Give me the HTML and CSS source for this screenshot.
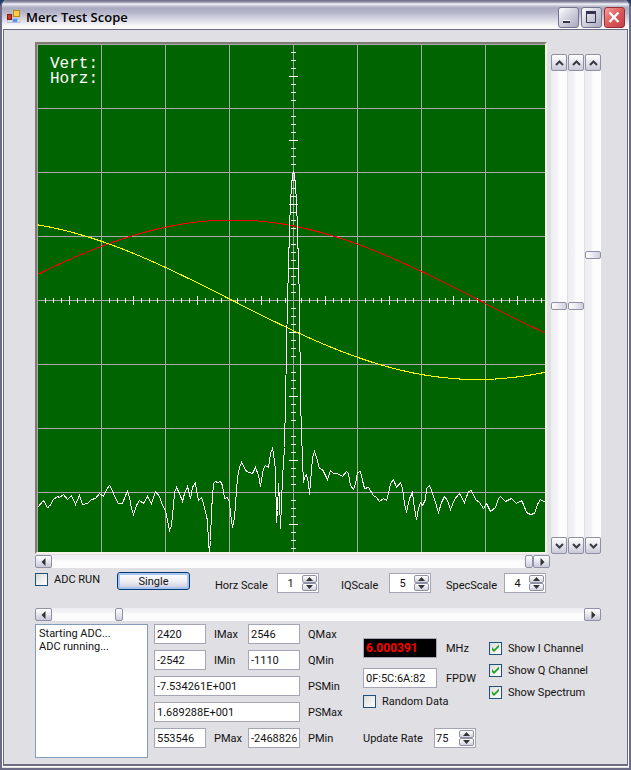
FILE: index.html
```
<!DOCTYPE html>
<html lang="en">
<head>
  <meta charset="UTF-8" />
  <meta name="viewport" content="width=device-width, initial-scale=1.0"/>
  <title>Merc Test Scope</title>
  <link rel="stylesheet" href="styles.css">
</head>
<body>

  <!-- shared icons -->
  <svg class="defs" width="0" height="0" aria-hidden="true">
    <symbol id="up" viewBox="0 0 9 6"><path d="M1 5 4.500 1.500 8 5" fill="none" stroke="#3a3a44" stroke-width="2"/></symbol>
    <symbol id="down" viewBox="0 0 9 6"><path d="M1 1 4.500 4.500 8 1" fill="none" stroke="#3a3a44" stroke-width="2"/></symbol>
    <symbol id="left" viewBox="0 0 6 8"><path d="M4.500 0v8L.5 4z" fill="#333"/></symbol>
    <symbol id="right" viewBox="0 0 6 8"><path d="M1.500 0v8l4-4z" fill="#333"/></symbol>
    <symbol id="tri-up" viewBox="0 0 7 4"><path d="M0 4h7L3.500 0z" fill="#333"/></symbol>
    <symbol id="tri-down" viewBox="0 0 7 4"><path d="M0 0h7L3.500 4z" fill="#333"/></symbol>
  </svg>

  <div class="window">
    <header class="titlebar">
      <svg class="app-icon" viewBox="0 0 14 14" aria-hidden="true">
        <path d="M0 12.500h13M.5 3v10M5.500 0v12M13 7v6" stroke="#c4c4cc" fill="none"/>
        <rect x=".5" y="4.500" width="4" height="5" fill="#c8392b" stroke="#8c1712"/>
        <rect x="6.500" y=".5" width="6" height="6" fill="#f8cf4a" stroke="#b98713"/>
        <rect x="5.500" y="8.500" width="5" height="4" fill="#5b94ea" stroke="#a9c6f3"/>
      </svg>
      <h1>Merc Test Scope</h1>
      <div class="window-buttons">
        <button class="win-btn" aria-label="Minimize"><svg viewBox="0 0 18 18"><path d="M4 12h7v3H4z" fill="#fff"/><path d="M4 13h7v2H4z" fill="#33334f"/></svg></button>
        <button class="win-btn" aria-label="Maximize"><svg viewBox="0 0 18 18"><path d="M4.500 5v9.500h9V5" fill="none" stroke="#33334f"/><path d="M4 4.500h10" stroke="#33334f" stroke-width="3"/></svg></button>
        <button class="win-btn close" aria-label="Close"><svg viewBox="0 0 18 18"><path d="M4.500 4.500l9 9.500M13.500 4.500l-9 9.500" fill="none" stroke="#fff" stroke-width="2.400"/></svg></button>
      </div>
    </header>

    <main class="client">
      <div class="display">
        <div class="scope">
          <svg id="scope" viewBox="0 0 508 508" role="img" aria-label="Scope display">
            <path id="grid" class="grid"/>
            <path id="ticks" class="ticks"/>
            <path id="iTrace" class="trace i-trace"/>
            <path id="qTrace" class="trace q-trace"/>
            <path id="spectrum" class="trace spectrum"/>
            <text x="13" y="24">Vert:</text>
            <text x="13" y="39">Horz:</text>
          </svg>
        </div>
        <div class="vbars">
          <div class="vbar">
            <button aria-label="I offset up"><svg><use href="#up"/></svg></button>
            <input type="range" aria-label="I offset" min="0" max="1000" value="505">
            <button aria-label="I offset down"><svg><use href="#down"/></svg></button>
          </div>
          <div class="vbar">
            <button aria-label="Q offset up"><svg><use href="#up"/></svg></button>
            <input type="range" aria-label="Q offset" min="0" max="1000" value="505">
            <button aria-label="Q offset down"><svg><use href="#down"/></svg></button>
          </div>
          <div class="vbar">
            <button aria-label="Spectrum offset up"><svg><use href="#up"/></svg></button>
            <input type="range" aria-label="Spectrum offset" min="0" max="1000" value="392">
            <button aria-label="Spectrum offset down"><svg><use href="#down"/></svg></button>
          </div>
        </div>
      </div>

      <div class="hbar hbar-scope">
        <button aria-label="Scroll left"><svg><use href="#left"/></svg></button>
        <input type="range" aria-label="Horizontal position" min="0" max="1000" value="1000">
        <button aria-label="Scroll right"><svg><use href="#right"/></svg></button>
      </div>

      <div class="controls">
        <label class="check"><input type="checkbox"> ADC RUN</label>
        <button class="btn-single">Single</button>
        <label class="low" for="horzScale">Horz Scale</label>
        <div class="spin">
          <input type="text" id="horzScale" value="1">
          <button aria-label="Increase"><svg><use href="#tri-up"/></svg></button>
          <button aria-label="Decrease"><svg><use href="#tri-down"/></svg></button>
        </div>
        <label class="low" for="iqScale">IQScale</label>
        <div class="spin">
          <input type="text" id="iqScale" value="5">
          <button aria-label="Increase"><svg><use href="#tri-up"/></svg></button>
          <button aria-label="Decrease"><svg><use href="#tri-down"/></svg></button>
        </div>
        <label class="low" for="specScale">SpecScale</label>
        <div class="spin">
          <input type="text" id="specScale" value="4">
          <button aria-label="Increase"><svg><use href="#tri-up"/></svg></button>
          <button aria-label="Decrease"><svg><use href="#tri-down"/></svg></button>
        </div>
      </div>

      <div class="hbar">
        <button aria-label="Tune down"><svg><use href="#left"/></svg></button>
        <input type="range" aria-label="Tuning" min="0" max="1000" value="120">
        <button aria-label="Tune up"><svg><use href="#right"/></svg></button>
      </div>

      <div class="panel">
        <textarea class="log" aria-label="Log" readonly>Starting ADC...
ADC running...</textarea>

        <div class="readings">
          <input type="text" id="iMax" value="2420"><label for="iMax">IMax</label>
          <input type="text" id="qMax" value="2546"><label for="qMax">QMax</label>
          <input type="text" id="iMin" value="-2542"><label for="iMin">IMin</label>
          <input type="text" id="qMin" value="-1110"><label for="qMin">QMin</label>
          <input type="text" id="psMin" class="wide" value="-7.534261E+001"><label for="psMin">PSMin</label>
          <input type="text" id="psMax" class="wide" value="1.689288E+001"><label for="psMax">PSMax</label>
          <input type="text" id="pMax" value="553546"><label for="pMax">PMax</label>
          <input type="text" id="pMin" value="-2468826"><label for="pMin">PMin</label>
        </div>

        <div class="tuning">
          <div class="field"><input type="text" id="freq" class="freq" value="6.000391"><label for="freq">MHz</label></div>
          <div class="field"><input type="text" id="fpdw" value="0F:5C:6A:82"><label for="fpdw">FPDW</label></div>
          <label class="check"><input type="checkbox"> Random Data</label>
          <div class="rate">
            <label for="rate">Update Rate</label>
            <div class="spin">
              <input type="text" id="rate" value="75">
              <button aria-label="Increase"><svg><use href="#tri-up"/></svg></button>
              <button aria-label="Decrease"><svg><use href="#tri-down"/></svg></button>
            </div>
          </div>
        </div>

        <div class="channels">
          <label class="check"><input type="checkbox" checked> Show I Channel</label>
          <label class="check"><input type="checkbox" checked> Show Q Channel</label>
          <label class="check"><input type="checkbox" checked> Show Spectrum</label>
        </div>
      </div>
    </main>
  </div>

  <script src="scope.js"></script>
</body>
</html>
```
FILE: styles.css
```
* {
  box-sizing: border-box;
}
body {
  margin: 0;
  background: #1d3b66;
  font-family: Roboto, "Liberation Sans", sans-serif;
  font-size: 11px;
  line-height: 13px;
  color: #111;
}
button, input, textarea {
  font: inherit;
  color: inherit;
  margin: 0;
  padding: 0;
}
.defs { position: absolute; }

.window {
  display: flex;
  flex-direction: column;
  min-height: 100vh;
  border: 2px solid #6b6b85;
  border-top: 0;
  border-radius: 7px 7px 0 0;
  background: #e0dfe3;
  overflow: hidden;
}
.titlebar {
  display: flex;
  align-items: center;
  height: 29px;
  padding: 5px 4px 0 5px;
  background: linear-gradient(#6b6b85 0, #8e8ea6 2px, #f4f4fa 4px, #c3c3d5 6px, #a9a9bf 8px, #b8b8cd 13px, #d6d6e2 19px, #f3f3f7 25px, #fff 27px, #dcdce4 29px);
}
.titlebar h1 {
  flex: 1;
  margin: 0 0 0 5px;
  font: 600 13px/18px "Open Sans", sans-serif;
  color: #000;
}
.app-icon { width: 14px; height: 14px; }
.window-buttons {
  display: flex;
  gap: 2px;
}
.win-btn {
  width: 21px;
  height: 21px;
  border: 1px solid #73738f;
  border-radius: 3px;
  background: linear-gradient(135deg, #fff, #d3d3df 45%, #a9a9bf);
}
.win-btn svg { display: block; width: 18px; height: 18px; }
.win-btn.close {
  border-color: #9c2b33;
  background: linear-gradient(135deg, #f3a09c, #dd5a5a 50%, #c04048);
}

.client {
  flex: 1;
  padding: 12px 26px 6px 31px;
  border: 1px solid #6b6b85;
  border-width: 1px 1px 2px 1px;
  outline: 1px solid #fff;
  margin: 0 1px 2px;
}

/* scope and its scrollbars */
.display {
  display: flex;
  gap: 4px;
}
.scope {
  flex: 1;
  border: 2px solid;
  border-color: #7d7b74 #f5f3e8 #f5f3e8 #7d7b74;
}
.scope svg {
  display: block;
  width: 100%;
  background: #006400;
}
.scope path {
  fill: none;
  shape-rendering: crispEdges;
}
.grid { stroke: #a9a9a9; }
.ticks { stroke: #fff; }
.i-trace { stroke: #ff0000; }
.q-trace { stroke: #ffff00; }
.spectrum { stroke: #fff; }
.scope text {
  font: 16px "Liberation Mono", monospace;
  fill: #fff;
}

.vbars {
  display: flex;
  gap: 1px;
  padding-top: 12px;
}
.vbar {
  display: flex;
  flex-direction: column;
  width: 16px;
}
.hbar {
  display: flex;
  height: 13px;
}
.hbar-scope { margin: 1px 51px 0 0; }
.vbar button, .hbar button {
  display: flex;
  align-items: center;
  justify-content: center;
  flex: none;
  border: 1px solid #8f8fa6;
  border-radius: 2px;
  background: linear-gradient(#fff, #e6e6ee 50%, #c9c9d8);
}
.vbar button { width: 16px; height: 17px; }
.hbar button { width: 17px; height: 13px; }
.vbar button svg { width: 9px; height: 6px; }
.hbar button svg { width: 6px; height: 8px; }
.vbar input, .hbar input {
  appearance: none;
  flex: 1;
  min-width: 0;
  min-height: 0;
}
.vbar input {
  writing-mode: vertical-lr;
  width: 16px;
  background: linear-gradient(90deg, #ededf2 0, #f2f2f6 6px, #fcfcfd 8px);
}
.hbar input {
  height: 13px;
  background: linear-gradient(#ededf2 0, #f2f2f6 4px, #fcfcfd 6px);
}
.vbar input::-webkit-slider-thumb {
  appearance: none;
  width: 16px;
  height: 8px;
  border: 1px solid #8f8fa6;
  border-radius: 2px;
  background: linear-gradient(90deg, #fff, #d0d0dd);
}
.hbar input::-webkit-slider-thumb {
  appearance: none;
  width: 8px;
  height: 13px;
  border: 1px solid #8f8fa6;
  border-radius: 2px;
  background: linear-gradient(#fff, #d0d0dd);
}

/* control row */
.controls {
  display: grid;
  grid-template-columns: 82px 98px 62px 64px 48px 57px 58px 1fr;
  align-items: start;
  padding: 4px 0 15px;
}
.controls .low { padding-top: 7px; }
.check {
  display: flex;
  align-items: center;
  gap: 6px;
  white-space: nowrap;
}
.controls .check { padding-top: 1px; }
.check input {
  appearance: none;
  width: 13px;
  height: 13px;
  border: 1px solid #1c5180;
  background: linear-gradient(135deg, #dcdcd7, #fff);
}
.check input:checked {
  background: url("data:image/svg+xml,%3Csvg xmlns='http://www.w3.org/2000/svg' viewBox='0 0 11 11'%3E%3Cpath d='M2 4v3l2 2 5-5V1.500L4 6.500z' fill='%2321a121'/%3E%3C/svg%3E"), linear-gradient(135deg, #dcdcd7, #fff);
}
.btn-single {
  width: 73px;
  height: 18px;
  border: 1px solid #003c74;
  border-radius: 3px;
  background: linear-gradient(#fff, #f0f0f5 50%, #c8c8da);
  box-shadow: inset 0 0 0 2px #a9c4f0;
}
.spin {
  display: grid;
  grid-template-columns: 1fr 15px;
  grid-template-rows: 8px 8px;
  width: 42px;
  height: 20px;
  padding: 1px;
  border: 1px solid #a5a5b5;
  background: #fff;
}
.controls .spin { margin-top: 1px; }
.spin input {
  grid-row: span 2;
  width: 100%;
  border: 0;
  background: none;
  text-align: center;
}
.rate .spin input { text-align: left; }
.spin button {
  display: flex;
  align-items: center;
  justify-content: center;
  border: 1px solid #8f8fa6;
  border-radius: 2px;
  background: linear-gradient(#fff, #d3d3df);
}
.spin button svg { width: 7px; height: 4px; }

/* bottom panel */
.panel {
  display: flex;
  padding-top: 3px;
}
.log {
  width: 113px;
  height: 134px;
  padding: 2px 3px;
  border: 1px solid #7f9db9;
  background: #fff;
  resize: none;
}
.readings {
  display: grid;
  grid-template-columns: 52px 26px 52px 1fr;
  grid-auto-rows: 20px;
  gap: 6px 8px;
  align-items: center;
  width: 209px;
  margin-left: 6px;
}
.readings input, .field input {
  width: 100%;
  height: 20px;
  padding: 0 2px;
  border: 1px solid #a5a5b5;
  background: #fff;
}
.readings .wide { grid-column: span 3; }
.tuning {
  display: flex;
  flex-direction: column;
  width: 126px;
  padding-top: 14px;
}
.field {
  display: flex;
  align-items: center;
  gap: 9px;
  margin-bottom: 10px;
}
.field input { width: 74px; }
.field .freq {
  background: #000;
  color: #f00;
  font-size: 12px;
  font-weight: bold;
}
.tuning .check { margin-top: -3px; }
.rate {
  display: flex;
  align-items: center;
  justify-content: space-between;
  width: 113px;
  margin-top: 20px;
}
.channels {
  display: flex;
  flex-direction: column;
  gap: 9px;
  padding-top: 18px;
}
```
FILE: scope.js
```
const SIZE = 508;
const DIV = 64;
const MID = 256;

// Grid lines, one per division
let grid = '';
for (let p = 0; p < SIZE; p += DIV) {
  grid += `M${p + 0.5} 0V${SIZE}M0 ${p + 0.5}H${SIZE}`;
}
document.getElementById('grid').setAttribute('d', grid);

// Tick marks on the centre axes, longer at half divisions
let ticks = '';
for (let p = 8; p < SIZE; p += 8) {
  if (p % DIV === 0) continue;
  const len = p % 32 === 0 ? 4 : 2;
  ticks += `M${MID - len} ${p + 0.5}H${MID + len + 1}`;
  ticks += `M${p + 0.5} ${MID - len}V${MID + len + 1}`;
}
document.getElementById('ticks').setAttribute('d', ticks);

// I and Q sine waves
function sine(peak, amplitude) {
  let d = '';
  for (let x = 0; x <= SIZE; x++) {
    const y = MID - amplitude * Math.cos(2 * Math.PI * (x - peak) / 984);
    d += `${x ? 'L' : 'M'}${x + 0.5} ${y.toFixed(1)}`;
  }
  return d;
}
document.getElementById('iTrace').setAttribute('d', sine(195, 80));
document.getElementById('qTrace').setAttribute('d', sine(440, -79.5));

const spectrum = [
  0,463, 6,456, 10,463, 12,462, 16,455, 20,452, 22,453, 26,450, 30,455, 34,451,
  38,460, 42,451, 45,460, 50,459, 54,455, 58,454, 62,449, 66,452, 69,445, 72,441,
  74,444, 78,454, 81,459, 85,459, 88,451, 90,447, 92,453, 94,464, 96,470, 99,461,
  102,456, 106,459, 110,452, 114,459, 118,447, 122,452, 125,461, 128,466, 130,476,
  132,486, 134,481, 136,461, 137,448, 139,443, 142,449, 145,457, 147,449, 150,442,
  153,454, 155,443, 158,438, 159,446, 161,456, 164,453, 166,459, 170,476, 171,499,
  172,508, 173,496, 174,466, 176,439, 178,437, 180,438, 183,437, 185,441, 187,454,
  190,453, 192,458, 193,469, 195,483, 197,473, 200,433, 202,423, 204,418, 209,427,
  215,429, 218,423, 221,431, 223,442, 226,424, 228,421, 231,423, 233,409, 235,404,
  236,409, 238,426, 239,478, 240,466, 241,439, 242,456, 243,484, 245,433, 247,403,
  248,356, 249,306, 250,256, 252,186, 253,156, 255,130, 256,128, 257,130, 259,156,
  260,186, 262,256, 263,356, 264,386, 265,416, 266,438, 267,433, 269,430, 271,439,
  272,450, 273,438, 275,413, 277,407, 279,413, 282,424, 285,425, 290,435, 293,426,
  296,429, 300,429, 305,432, 309,427, 311,429, 313,441, 316,445, 318,439, 320,428,
  323,427, 325,436, 327,444, 331,443, 336,451, 339,453, 342,457, 346,454, 349,456,
  351,449, 353,439, 356,435, 359,443, 363,438, 365,444, 367,459, 369,468, 372,454,
  375,448, 377,464, 379,475, 381,464, 383,458, 385,461, 388,455, 389,444, 392,441,
  394,446, 398,458, 401,468, 404,458, 407,452, 410,456, 413,465, 417,455, 422,449,
  427,458, 431,447, 434,446, 438,455, 442,458, 446,464, 449,459, 453,467, 458,463,
  461,454, 463,452, 468,457, 474,454, 479,459, 484,456, 486,460, 489,468, 493,470,
  497,469, 500,460, 503,455, 506,457, 508,457
];
let trace = '';
for (let i = 0; i < spectrum.length; i += 2) {
  trace += `${i ? 'L' : 'M'}${spectrum[i] + 0.5} ${spectrum[i + 1] + 0.5}`;
}
document.getElementById('spectrum').setAttribute('d', trace);
```
